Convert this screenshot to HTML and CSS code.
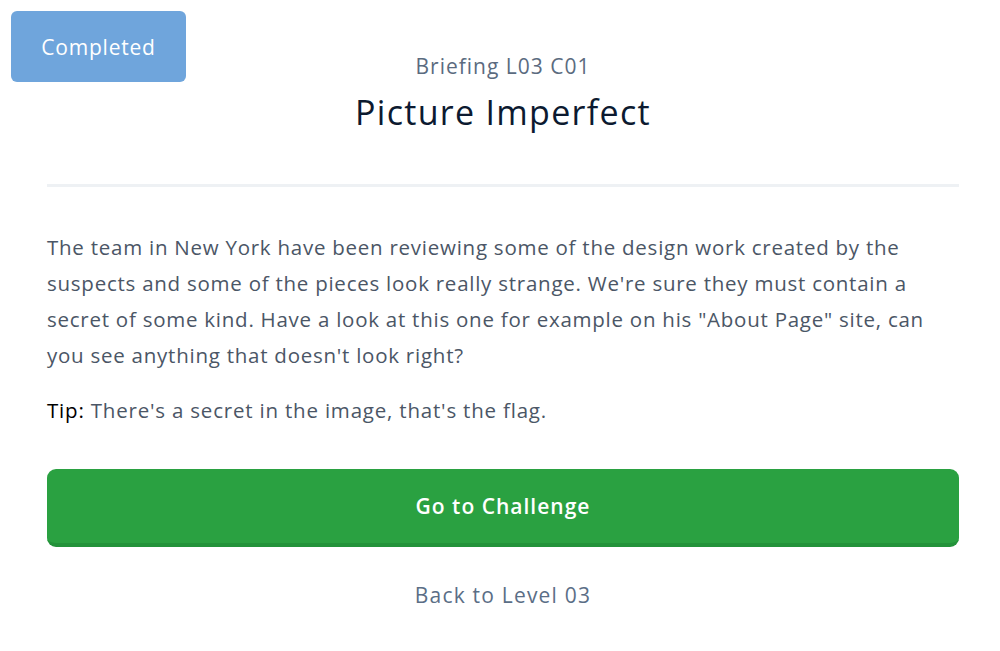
FILE: index.html
```html
<!DOCTYPE html>
<html>
<head>
<meta charset="utf-8">
<link rel="stylesheet" href="styles.css">
</head>
<body>
<div class="badge">Completed</div>
<main class="page">
  <header class="head">
    <div class="sub">Briefing L03 C01</div>
    <h1 class="title">Picture Imperfect</h1>
  </header>
  <hr class="rule">
  <p class="text">The team in New York have been reviewing some of the design work created by the suspects and some of the pieces look really strange. We're sure they must contain a secret of some kind. Have a look at this one for example on his "About Page" site, can you see anything that doesn't look right?</p>
  <p class="tip"><span class="tip-label">Tip:</span> There's a secret in the image, that's the flag.</p>
  <a class="go" href="#">Go to Challenge</a>
  <a class="back" href="#">Back to Level 03</a>
</main>
</body>
</html>
```
FILE: styles.css
```css
html, body {
  margin: 0;
  padding: 0;
  background: #fff;
}
body {
  font-family: "Open Sans", Lato, sans-serif;
  position: relative;
}
.badge {
  position: absolute;
  left: 11px;
  top: 11px;
  width: 175px;
  height: 71px;
  box-sizing: border-box;
  background: #6fa5dc;
  color: #fff;
  border-radius: 6px;
  font-size: 21px;
  letter-spacing: 0.8px;
  display: flex;
  align-items: center;
  justify-content: center;
}
.page {
  width: 912px;
  margin-left: 47px;
  padding-top: 52px;
  display: flex;
  flex-direction: column;
}
.head {
  text-align: center;
}
.sub {
  color: #5b6b7f;
  font-size: 21px;
  letter-spacing: 1px;
  line-height: 28px;
}
.title {
  margin: 8px 0 0;
  font-weight: 500;
  font-size: 34px;
  letter-spacing: 1.3px;
  line-height: 48px;
  color: #0c1a30;
}
.rule {
  border: 0;
  height: 3px;
  background: #eef1f4;
  margin: 48px 0 0;
}
.text {
  margin: 42px 0 0;
  font-size: 20.5px;
  letter-spacing: 0.75px;
  line-height: 36px;
  color: #4b5666;
}
.tip {
  margin: 19px 0 0;
  font-size: 20.5px;
  letter-spacing: 0.8px;
  line-height: 36px;
  color: #4b5666;
}
.tip-label {
  color: #000;
}
.go {
  margin-top: 41px;
  height: 78px;
  box-sizing: border-box;
  background: #2aa141;
  border-bottom: 4px solid #23923a;
  border-radius: 9px;
  color: #fff;
  font-size: 21px;
  font-weight: 600;
  letter-spacing: 1px;
  text-decoration: none;
  display: flex;
  align-items: center;
  justify-content: center;
}
.back {
  margin-top: 34px;
  text-align: center;
  color: #5b6e86;
  font-size: 21px;
  letter-spacing: 1.2px;
  line-height: 28px;
  text-decoration: none;
}
```
